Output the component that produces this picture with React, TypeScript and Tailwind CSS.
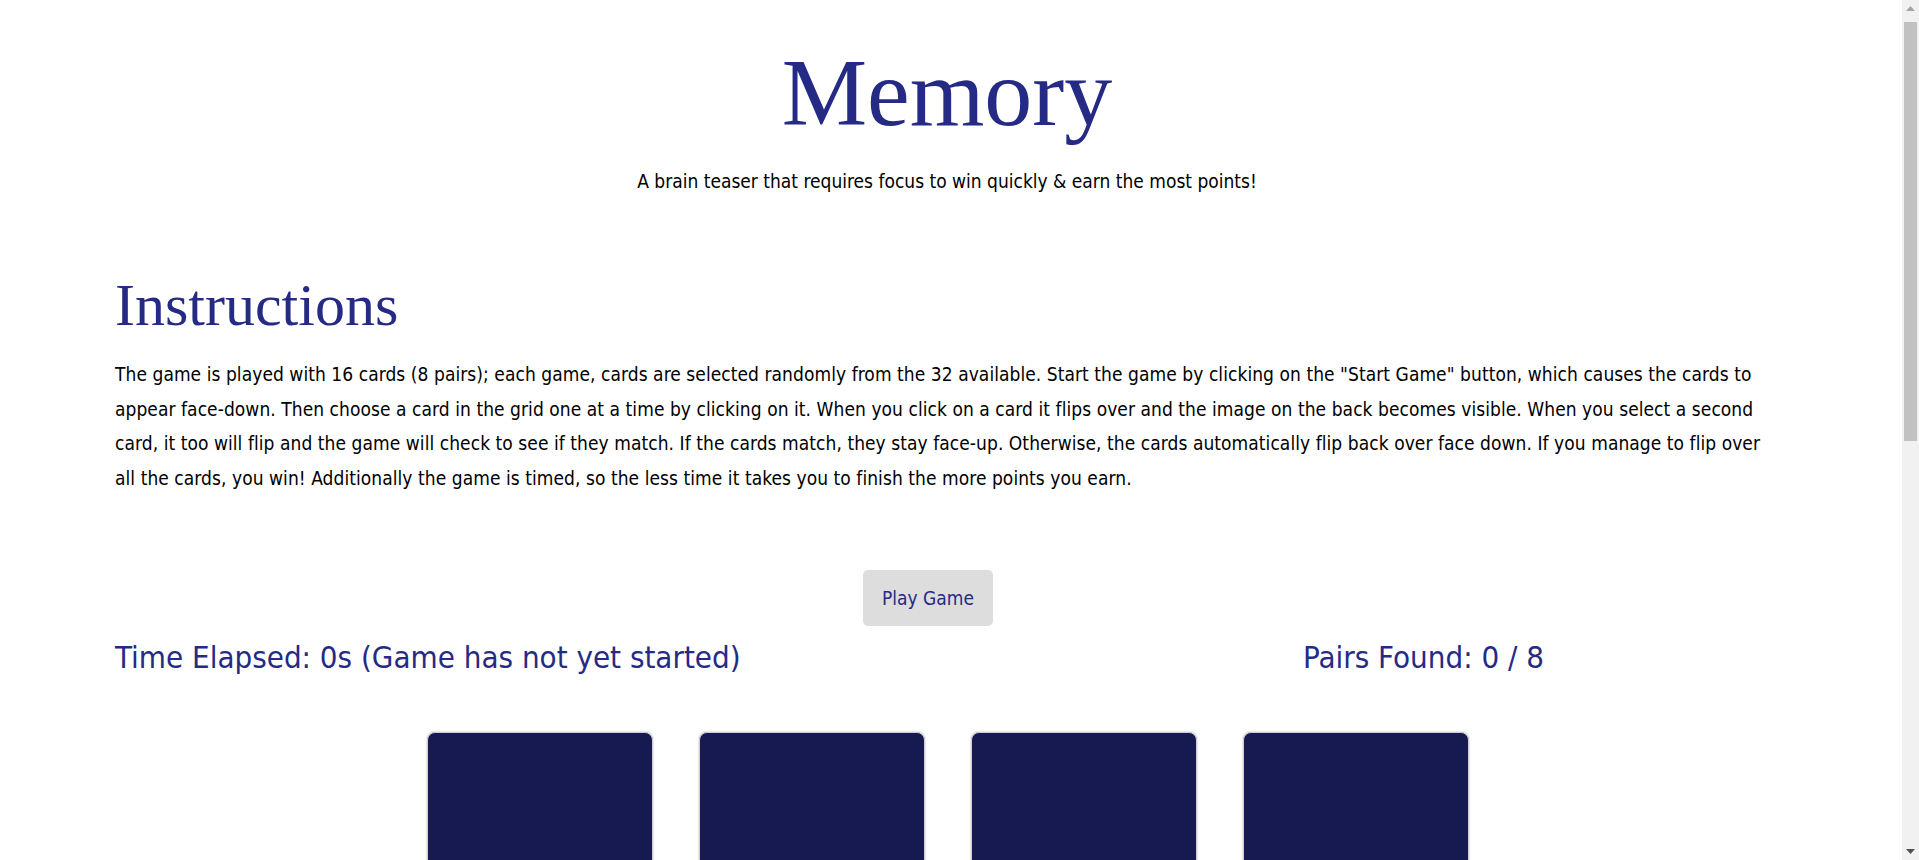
import React from "react";

const narrow = { fontFamily: '"Liberation Sans Narrow", "DejaVu Sans Condensed", "Roboto Condensed", sans-serif' };
const serif = { fontFamily: '"Liberation Serif", "Times New Roman", serif' };

function FakeScrollbar() {
  return (
    <div className="fixed top-0 right-0 w-[17px] h-screen bg-[#f1f1f1] flex flex-col items-center">
      <div className="h-[17px] w-full flex items-center justify-center">
        <svg width="9" height="5" viewBox="0 0 9 5">
          <polygon points="0,5 4.5,0 9,5" fill="#a3a3a3" />
        </svg>
      </div>
      <div className="flex-1 w-full px-[2px] pt-[5px]">
        <div className="w-full h-[419px] bg-[#c1c1c1]" />
      </div>
      <div className="h-[17px] w-full flex items-center justify-center">
        <svg width="9" height="5" viewBox="0 0 9 5">
          <polygon points="0,0 9,0 4.5,5" fill="#505050" />
        </svg>
      </div>
    </div>
  );
}

export default function App() {
  const cards = Array.from({ length: 16 }, (_, i) => i);
  return (
    <div className="bg-white min-h-screen text-black" style={narrow}>
      <div className="mr-[17px]">
        <header className="flex flex-col items-center pt-[45px] pr-[8px]">
          <h1 className="text-[96px] leading-none text-[#252b85]" style={serif}>
            Memory
          </h1>
          <p className="mt-[26px] text-[19px] leading-[28px]">
            A brain teaser that requires focus to win quickly &amp; earn the most points!
          </p>
        </header>

        <section className="px-[115px] mt-[80px]">
          <h2 className="text-[60px] leading-none text-[#252b85]" style={serif}>
            Instructions
          </h2>
          <p className="mt-[22px] text-[19px] leading-[34.5px] tracking-[0.06px] whitespace-nowrap">
            The game is played with 16 cards (8 pairs); each game, cards are selected randomly from the 32 available. Start the game by clicking on the "Start Game" button, which causes the cards to
            <br />
            appear face-down. Then choose a card in the grid one at a time by clicking on it. When you click on a card it flips over and the image on the back becomes visible. When you select a second
            <br />
            card, it too will flip and the game will check to see if they match. If the cards match, they stay face-up. Otherwise, the cards automatically flip back over face down. If you manage to flip over
            <br />
            all the cards, you win! Additionally the game is timed, so the less time it takes you to finish the more points you earn.
          </p>
        </section>

        <div className="flex justify-center mt-[75px] pr-[46px]">
          <button className="w-[130px] h-[56px] rounded-[5px] bg-[#dddddd] text-[#252b85] text-[19px]" style={narrow}>
            Play Game
          </button>
        </div>

        <div className="flex px-[115px] mt-[11px] text-[31px] leading-[40px] text-[#252b85]">
          <div className="flex-1">Time Elapsed: 0s (Game has not yet started)</div>
          <div className="w-[484px]">Pairs Found: 0 / 8</div>
        </div>

        <div className="flex justify-center pr-[6px] mt-[55px] pb-[40px]">
          <div className="grid grid-cols-4 gap-x-[46px] gap-y-[46px]">
            {cards.map((i) => (
              <div
                key={i}
                className="w-[226px] h-[200px] rounded-[8px] bg-[#161a50] border border-[#cfcfcf] shadow-[0_0_2px_rgba(0,0,0,0.3)]"
              />
            ))}
          </div>
        </div>
      </div>
      <FakeScrollbar />
    </div>
  );
}
